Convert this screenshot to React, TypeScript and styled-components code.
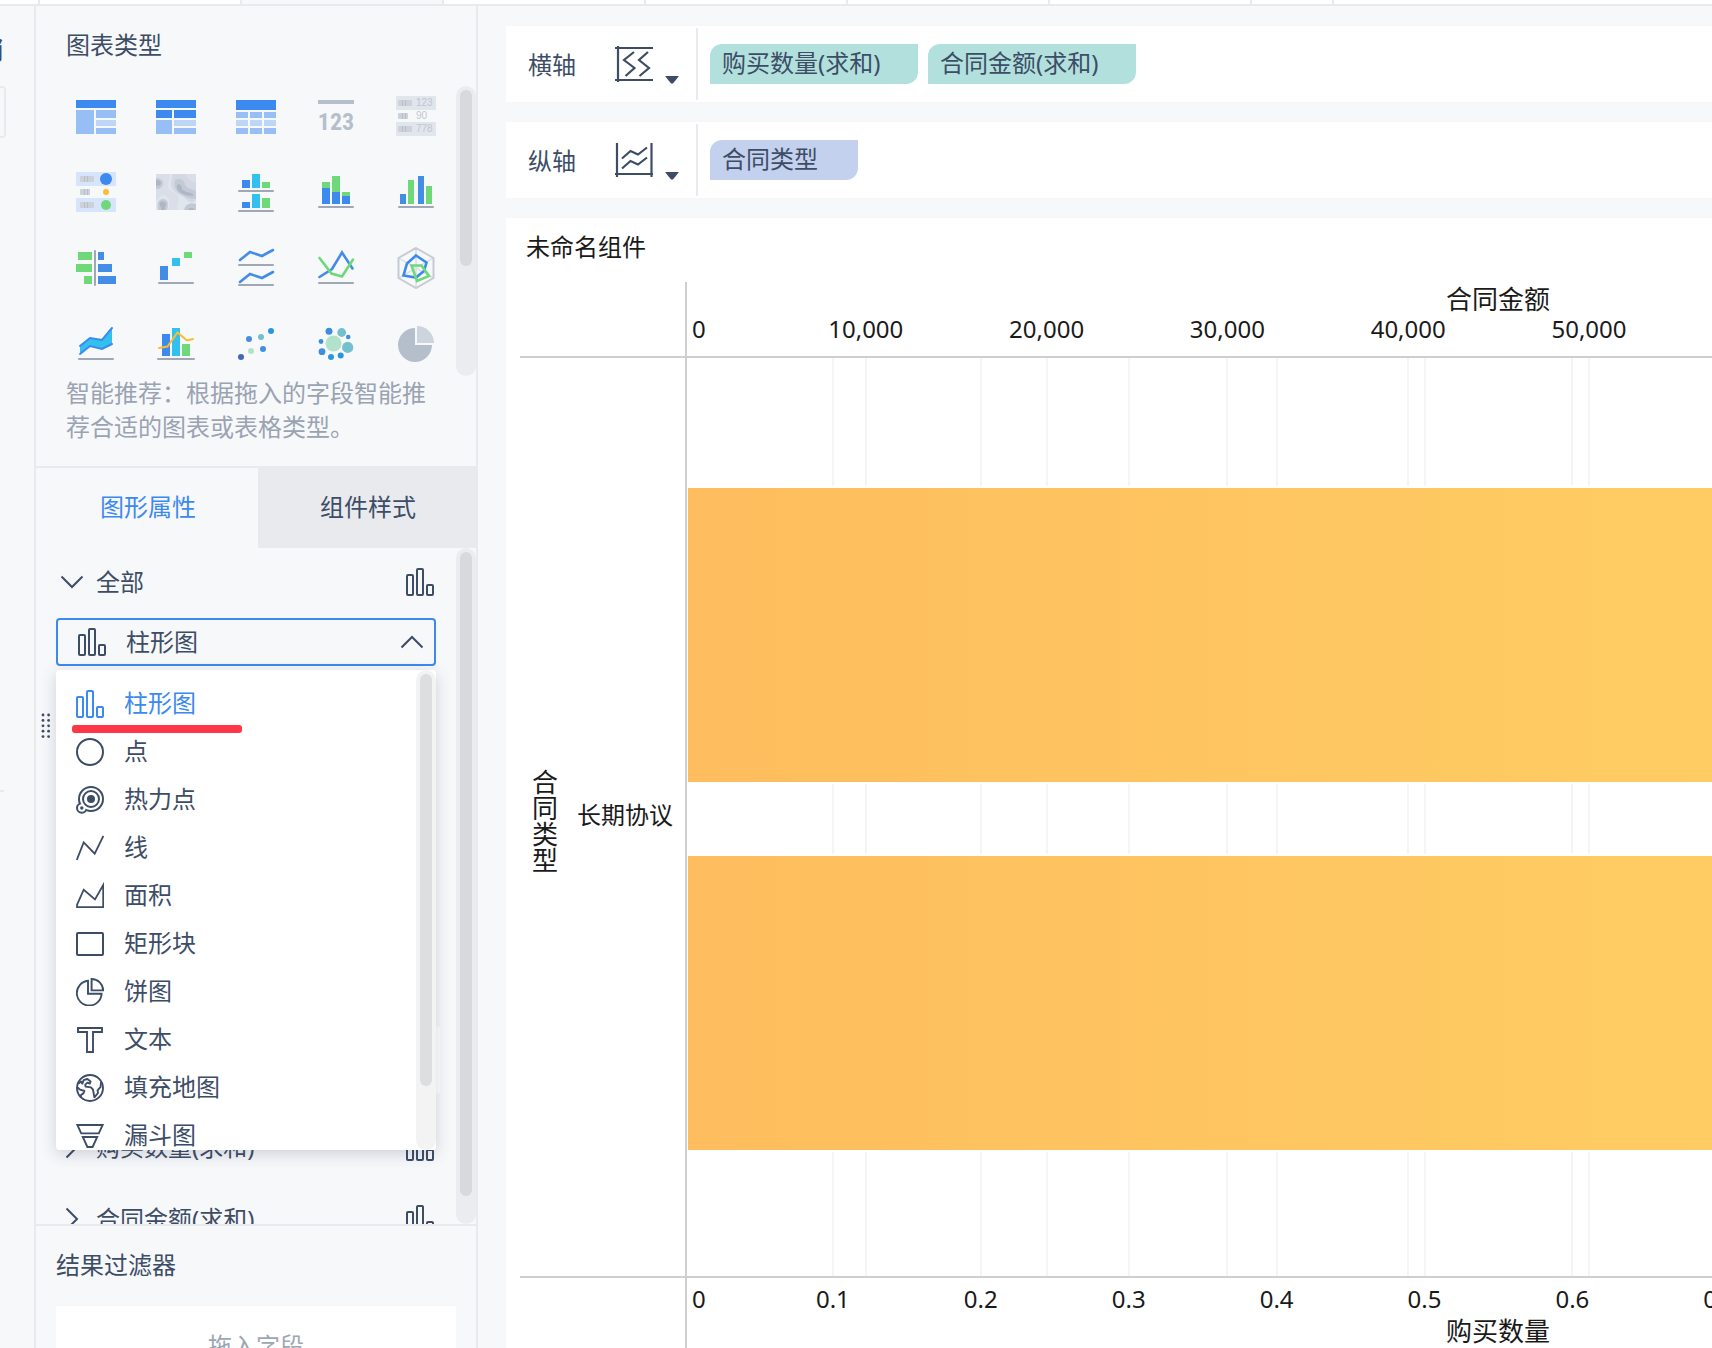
import React from "react";
import styled, { createGlobalStyle, css } from "styled-components";

const INK = "#3d4d66";
const BLUE = "#3c89f0";
const BLUE_SOFT = "#98bff5";
const BLUE_PALE = "#bdd6f8";
const STEEL = "#448de6";
const CYAN = "#32c0ef";
const GREEN = "#6fd97a";
const YELLOW = "#fcbd2e";
const RULE = "#a0a7b6";
const SILVER = "#b5becb";
const PANEL = "#f7f8fa";
const BORDER = "#e8eaed";

const GlobalStyle = createGlobalStyle`
  *, *::before, *::after { box-sizing: border-box; }
  body {
    margin: 0;
    background: ${PANEL};
    color: ${INK};
    font-family: "Noto Sans", "Noto Sans CJK SC", sans-serif;
    font-size: 24px;
    line-height: 34px;
  }
  button, select {
    margin: 0;
    padding: 0;
    border: 0;
    background: none;
    color: inherit;
    font: inherit;
    text-align: left;
    cursor: pointer;
  }
  svg { display: block; flex: none; }
`;

/* ---------- page frame ---------- */

const Page = styled.div`
  display: flex;
  flex-direction: column;
  height: 100vh;
  overflow: hidden;
`;

const TabStrip = styled.div`
  display: flex;
  flex: none;
  height: 6px;
  background: #fff;
  border-bottom: 2px solid ${BORDER};
`;

const StripTab = styled.div<{ $width: number; $active?: boolean }>`
  flex: none;
  width: ${(p) => p.$width}px;
  border-right: 2px solid ${BORDER};
  background: ${(p) => (p.$active ? PANEL : "#fff")};
`;

const Body = styled.div`
  display: flex;
  flex: 1;
  min-height: 0;
`;

/* ---------- data pane (mostly off screen) ---------- */

const DataPane = styled.aside`
  display: flex;
  flex-direction: column;
  flex: none;
  width: 36px;
  padding-right: 28px;
  border-right: 2px solid ${BORDER};
  overflow: hidden;
`;

const DataTitle = styled.h2`
  display: flex;
  justify-content: flex-end;
  flex: none;
  height: 80px;
  margin: 0;
  padding-right: 3px;
  overflow: hidden;
  font-size: 24px;
  font-weight: 700;
  line-height: 88px;
`;

const SearchEdge = styled.div`
  flex: none;
  height: 52px;
  border: 2px solid ${BORDER};
  border-left: 0;
  border-radius: 0 4px 4px 0;
`;

const PaneDivider = styled.div`
  flex: none;
  height: 2px;
  margin: 652px 2px 0 0;
  background: ${BORDER};
`;

/* ---------- settings pane ---------- */

const SettingsPane = styled.aside`
  position: relative;
  display: flex;
  flex-direction: column;
  flex: none;
  width: 442px;
  border-right: 2px solid ${BORDER};
`;

const PaneTitle = styled.h2`
  flex: none;
  height: 80px;
  margin: 0;
  padding-left: 30px;
  font-size: 24px;
  font-weight: 400;
  line-height: 78px;
`;

const TypeArea = styled.div`
  display: flex;
  flex: none;
  height: 290px;
`;

const TypeGrid = styled.div`
  display: grid;
  flex: 1;
  grid-template-columns: repeat(5, 40px);
  grid-auto-rows: 40px;
  gap: 36px 40px;
  padding: 10px 0 0 40px;
`;

const TypeButton = styled.button`
  width: 40px;
  height: 40px;
`;

const Track = styled.div<{ $tone?: "light" }>`
  flex: none;
  width: 20px;
  padding: 4px;
  border-radius: 10px;
  background: ${(p) => (p.$tone === "light" ? "#f3f3f3" : "#ebecf0")};
`;

const Thumb = styled.div<{ $size: number; $tone?: "light" }>`
  height: ${(p) => p.$size}px;
  border-radius: 6px;
  background: ${(p) => (p.$tone === "light" ? "#dddee0" : "#d8d9dd")};
`;

const Hint = styled.p`
  flex: none;
  margin: 0;
  padding: 0 44px 22px 30px;
  color: #9aa3b2;
`;

const Tabs = styled.div`
  display: flex;
  flex: none;
  height: 82px;
  border-top: 2px solid ${BORDER};
`;

const Tab = styled.button<{ $active?: boolean }>`
  flex: ${(p) => (p.$active ? 222 : 218)};
  padding: 0 0 2px 2px;
  text-align: center;
  color: ${(p) => (p.$active ? BLUE : INK)};
  background: ${(p) => (p.$active ? "transparent" : BORDER)};
`;

const AttrArea = styled.div`
  display: flex;
  flex: 1;
  min-height: 0;
  overflow: hidden;
`;

const AttrList = styled.div`
  flex: 1;
  padding: 0 16px 0 20px;
`;

const SectionRow = styled.button<{ $height: number }>`
  display: flex;
  align-items: center;
  gap: 12px;
  width: 100%;
  height: ${(p) => p.$height}px;
  padding: 0 6px 2px 4px;
`;

const SectionName = styled.span`
  flex: 1;
`;

const Field = styled.div`
  position: relative;
  display: flex;
  align-items: center;
  gap: 20px;
  height: 48px;
  margin-right: 4px;
  padding: 0 10px 0 20px;
  border: 2px solid ${BLUE};
  border-radius: 4px;
`;

const FieldSelect = styled.select`
  flex: 1;
  height: 34px;
  appearance: none;
  outline: none;
`;

const Popup = styled.div`
  position: absolute;
  z-index: 2;
  top: 50px;
  left: -2px;
  right: -2px;
  display: flex;
  height: 480px;
  overflow: hidden;
  border-radius: 4px;
  background: #fff;
`;

const PopupShadow = styled(Popup)`
  z-index: 1;
  box-shadow: 0 4px 16px rgba(40, 55, 85, 0.2);
`;

const OptionList = styled.ul`
  flex: 1;
  margin: 0;
  padding: 10px 0 0;
  list-style: none;
`;

const Option = styled.button<{ $active?: boolean }>`
  position: relative;
  display: flex;
  align-items: center;
  gap: 20px;
  width: 100%;
  height: 48px;
  padding-left: 20px;
  color: ${(p) => (p.$active ? BLUE : INK)};
`;

const OptionName = styled.span`
  padding-bottom: 2px;
`;

const Underline = styled.span`
  position: absolute;
  left: 16px;
  bottom: -5px;
  width: 170px;
  height: 8px;
  border-radius: 3px;
  background: #ff3646;
`;

const AttrCard = styled.div`
  height: 68px;
  margin: 360px 0 18px;
  border-radius: 4px;
  background: #fff;
`;

const FilterArea = styled.section`
  display: flex;
  flex-direction: column;
  flex: none;
  height: 124px;
  padding: 0 20px;
  border-top: 2px solid ${BORDER};
  overflow: hidden;
`;

const FilterTitle = styled.h2`
  flex: none;
  height: 80px;
  margin: 0;
  font-size: 24px;
  font-weight: 400;
  line-height: 78px;
`;

const DropZone = styled.div`
  flex: none;
  height: 80px;
  background: #fff;
  color: #9ea6b4;
  text-align: center;
  line-height: 80px;
`;

const Grip = styled.div`
  position: absolute;
  top: 707px;
  left: 5px;
`;

/* ---------- work area ---------- */

const Work = styled.main`
  display: flex;
  flex-direction: column;
  flex: 1;
  gap: 20px;
  min-width: 0;
  padding: 20px 0 0 28px;
`;

const AxisRow = styled.section`
  display: flex;
  flex: none;
  height: 76px;
  padding: 2px 0 2px 22px;
  background: #fff;
`;

const AxisName = styled.h3`
  width: 86px;
  margin: 0;
  font-size: 24px;
  font-weight: 400;
  line-height: 74px;
`;

const AxisButton = styled.button`
  display: flex;
  align-items: flex-end;
  align-self: center;
  gap: 11px;
  width: 82px;
  height: 40px;
`;

const PillList = styled.div`
  display: flex;
  flex: 1;
  align-items: center;
  gap: 10px;
  padding-left: 12px;
  border-left: 2px solid ${BORDER};
`;

const Pill = styled.button<{ $kind: "measure" | "dimension" }>`
  min-width: ${(p) => (p.$kind === "measure" ? 208 : 148)}px;
  height: 40px;
  padding: 0 36px 2px 12px;
  border-radius: 12px 0 12px 0;
  background: ${(p) => (p.$kind === "measure" ? "#b2e1dd" : "#c3d1ee")};
  line-height: 38px;
  white-space: nowrap;
`;

/* ---------- chart ---------- */

const ChartCard = styled.section`
  display: flex;
  flex-direction: column;
  flex: 1;
  min-height: 0;
  padding-left: 14px;
  background: #fff;
  color: #1a1a1a;
`;

const ChartTitle = styled.h2`
  flex: none;
  height: 64px;
  margin: 0;
  padding-left: 6px;
  font-size: 24px;
  font-weight: 400;
  line-height: 58px;
`;

const AXIS_LINE = "2px solid #cfcfcf";

const ChartGrid = styled.div`
  display: grid;
  flex: 1;
  grid-template-columns: 167px 1fr;
  grid-template-rows: 76px 1fr 70px;
  min-height: 0;
  overflow: hidden;
`;

const Corner = styled.div<{ $ruled?: boolean }>`
  border-right: ${AXIS_LINE};
  ${(p) => p.$ruled && css`border-bottom: ${AXIS_LINE};`}
`;

const CategoryCell = styled.div`
  display: flex;
  align-items: center;
  justify-content: space-between;
  padding: 0 12px;
  border-right: ${AXIS_LINE};
  border-bottom: ${AXIS_LINE};
`;

const VerticalTitle = styled.span`
  width: 26px;
  padding-top: 8px;
  font-size: 26px;
  line-height: 26px;
  word-break: break-all;
`;

const CategoryName = styled.span`
  padding-bottom: 4px;
`;

const AxisBand = styled.div<{ $ruled?: boolean }>`
  position: relative;
  width: 1622px;
  ${(p) => p.$ruled && css`border-bottom: ${AXIS_LINE};`}
`;

const BandTitle = styled.div<{ $below?: boolean }>`
  padding-top: ${(p) => (p.$below ? 36 : 0)}px;
  text-align: center;
  font-size: 26px;
  line-height: 34px;
`;

const Tick = styled.span<{ $below?: boolean; $first?: boolean }>`
  position: absolute;
  top: ${(p) => (p.$below ? 4 : 30)}px;
  transform: ${(p) => (p.$first ? "none" : "translateX(-50%)")};
`;

const Plot = styled.div`
  position: relative;
  display: flex;
  flex-direction: column;
  gap: 74px;
  width: 1622px;
  padding: 130px 144px 126px 1px;
  border-bottom: ${AXIS_LINE};
`;

const GridLine = styled.i`
  position: absolute;
  top: 0;
  bottom: 0;
  width: 2px;
  background: #f5f5f5;
`;

const Bar = styled.div`
  position: relative;
  flex: 1;
  background: linear-gradient(90deg, #febd5e, #ffd365);
  box-shadow: 0 0 0 2px #fff;
  clip-path: inset(-2px 0);
`;

/* ---------- chart type icons ---------- */

type R = [number, number, number, number, string];
const Rects = ({ items }: { items: R[] }) => (
  <>
    {items.map(([x, y, w, h, f], i) => (
      <rect key={i} x={x} y={y} width={w} height={h} fill={f} />
    ))}
  </>
);
const Base = ({ y, x = 2, w = 36 }: { y: number; x?: number; w?: number }) => (
  <rect x={x} y={y} width={w} height={2} rx={1} fill={RULE} />
);
const Dash = ({ x, y, w }: { x: number; y: number; w: number }) => (
  <g>
    <rect x={x} y={y} width={w} height={6} rx={1} fill="#ccd1da" />
    <rect x={x + 4} y={y} width={1} height={6} fill="#b9bfca" />
    <rect x={x + 7} y={y} width={1} height={6} fill="#b9bfca" />
  </g>
);
const Trend = ({ d, c, w = 2.6 }: { d: string; c: string; w?: number }) => (
  <polyline points={d} fill="none" stroke={c} strokeWidth={w} strokeLinecap="round" />
);
const numStyle = { fontFamily: '"Liberation Sans", sans-serif', fontSize: 10 };

const chartTypes: { name: string; art: React.ReactNode }[] = [
  {
    name: "分组表",
    art: <Rects items={[[0, 4, 40, 8, BLUE], [0, 14, 18, 24, BLUE_SOFT], [20, 14, 20, 8, BLUE_SOFT], [20, 24, 20, 6, BLUE_PALE], [20, 32, 20, 6, BLUE_SOFT]]} />,
  },
  {
    name: "交叉表",
    art: <Rects items={[[0, 4, 40, 8, BLUE], [0, 14, 16, 8, BLUE], [18, 14, 22, 8, BLUE], [0, 24, 16, 14, BLUE_SOFT], [18, 24, 22, 6, BLUE_PALE], [18, 32, 22, 6, BLUE_SOFT]]} />,
  },
  {
    name: "明细表",
    art: (
      <Rects
        items={[
          [0, 4, 40, 10, BLUE],
          ...[0, 14, 28].flatMap((x): R[] => [[x, 16, 12, 6, BLUE_SOFT], [x, 24, 12, 6, BLUE_PALE], [x, 32, 12, 6, BLUE_SOFT]]),
        ]}
      />
    ),
  },
  {
    name: "KPI指标卡",
    art: (
      <>
        <rect x={2} y={4} width={36} height={4} fill={SILVER} />
        <text x={20} y={34} textAnchor="middle" fill={SILVER} fontWeight={700} fontSize={24} fontFamily='"Liberation Sans Narrow", "Roboto Condensed", Roboto, sans-serif'>123</text>
      </>
    ),
  },
  {
    name: "文本表",
    art: (
      <>
        <Rects items={[[0, 0, 40, 14, "#e1e5ec"], [0, 26, 40, 14, "#e1e5ec"]]} />
        <Dash x={2} y={4} w={14} />
        <Dash x={2} y={17} w={10} />
        <Dash x={2} y={30} w={14} />
        <g fill="#c0c6d2" style={numStyle}>
          <text x={20} y={10}>123</text>
          <text x={20} y={23}>90</text>
          <text x={20} y={36}>778</text>
        </g>
      </>
    ),
  },
  {
    name: "颜色表格",
    art: (
      <>
        <Rects items={[[0, 0, 40, 14, "#d6e4fc"], [0, 26, 40, 14, "#d6e4fc"]]} />
        <Dash x={4} y={4} w={14} />
        <Dash x={4} y={17} w={10} />
        <Dash x={4} y={30} w={14} />
        <circle cx={30} cy={7} r={6} fill={BLUE} />
        <circle cx={30} cy={20} r={3} fill={YELLOW} />
        <circle cx={30} cy={33} r={5} fill={GREEN} />
      </>
    ),
  },
  {
    name: "热力区域图",
    art: (
      <svg x={0} y={2} width={40} height={36} viewBox="0 0 40 36">
        <rect width={40} height={36} fill="#e1e5ed" />
        <path d="M0 0H14C15 5 11 8 12 13C14 18 20 18 22 22C24 28 20 31 22 36H12C15 30 14 22 8 21C4 21 3 25 0 27Z" fill="#d9dee8" />
        <path d="M16 0H40V26C36 30 32 28 29 24C25 21 17 19 15 12C14 7 17 5 16 0Z" fill="#d3d8e2" />
        <path d="M19 6C24 3 29 6 29 11C31 15 36 15 40 17V25C35 25 31 24 27 21C21 19 17 13 19 6Z" fill="#c4cad5" />
        <path d="M21 11C23 9 26 11 26 15C28 18 33 18 37 20V22C32 22 28 21 25 19C22 17 20 14 21 11Z" fill="#afb7c4" />
        <path d="M0 4C4 4 7 6 7 9C7 13 4 15 0 15Z" fill="#c4cad5" />
        <path d="M0 6C3 6 5 7 5 9C5 11 3 12 0 12Z" fill="#afb7c4" />
        <path d="M2 36C1 30 2 25 7 25C12 25 13 30 11 36Z" fill="#c4cad5" />
        <path d="M5 36C6 33 3 32 4 29C5 27 9 27 10 30C10 33 8 33 9 36Z" fill="#afb7c4" />
        <path d="M28 36C29 31 34 28 40 30V36Z" fill="#c4cad5" />
        <path d="M32 36C33 33 37 33 39 36Z" fill="#afb7c4" />
        <path d="M30 0C31 5 35 8 40 9V0Z" fill="#d9dee8" />
      </svg>
    ),
  },
  {
    name: "多系列柱形图",
    art: (
      <>
        <Rects items={[[6, 8, 8, 8, BLUE], [16, 2, 8, 14, CYAN], [26, 10, 8, 6, GREEN], [6, 30, 8, 6, BLUE], [16, 22, 8, 14, CYAN], [26, 26, 8, 10, GREEN]]} />
        <Base y={18} />
        <Base y={38} />
      </>
    ),
  },
  {
    name: "堆积柱形图",
    art: (
      <>
        <Rects items={[[6, 10, 8, 6, GREEN], [6, 16, 8, 16, BLUE], [16, 4, 8, 16, GREEN], [16, 20, 8, 12, BLUE], [26, 20, 8, 4, GREEN], [26, 24, 8, 8, BLUE]]} />
        <Base y={34} />
      </>
    ),
  },
  {
    name: "分组柱形图",
    art: (
      <>
        <Rects items={[[4, 22, 6, 10, STEEL], [12, 8, 6, 24, GREEN], [22, 4, 6, 28, STEEL], [30, 14, 6, 18, GREEN]]} />
        <Base y={34} />
      </>
    ),
  },
  {
    name: "对比柱状图",
    art: (
      <>
        <Rects items={[[2, 4, 14, 8, GREEN], [0, 16, 16, 8, GREEN], [8, 28, 8, 8, GREEN], [22, 4, 6, 8, STEEL], [22, 16, 14, 8, STEEL], [22, 28, 18, 8, STEEL]]} />
        <rect x={18} y={2} width={2} height={36} rx={1} fill={RULE} />
      </>
    ),
  },
  {
    name: "瀑布图",
    art: (
      <>
        <Rects items={[[4, 18, 8, 14, STEEL], [16, 10, 8, 8, CYAN], [28, 4, 8, 6, GREEN]]} />
        <Base y={34} />
      </>
    ),
  },
  {
    name: "多系列折线图",
    art: (
      <>
        <Trend d="4,12 14,4 26,8 37,2" c={STEEL} />
        <Trend d="4,34 14,26 26,30 37,24" c={STEEL} />
        <Base y={16} />
        <Base y={36} />
      </>
    ),
  },
  {
    name: "范围折线图",
    art: (
      <>
        <Trend d="3.5,29 16,21 26,4.5 36.5,20.5" c={STEEL} />
        <Trend d="3.5,10 15.5,25.5 26,28.5 37,11.5" c={GREEN} />
        <Base y={34} />
      </>
    ),
  },
  {
    name: "雷达图",
    art: (
      <g fill="none" strokeWidth={2}>
        <path d="M20 20V0M20 20L37.5 10M20 20L37.5 30M20 20V40M20 20L2.5 30M20 20L2.5 10" stroke="#dfe3e9" />
        <path d="M20 0L37.5 10V30L20 40L2.5 30V10Z" stroke="#c6ccd6" />
        <path d="M20 7.5L30.5 14.5L28 23L20 29.5L7.5 27.5L11 15.5Z" stroke={BLUE} strokeWidth={2.6} />
        <path d="M15.5 17.5H25.5L33 28L21 33Z" stroke={GREEN} strokeWidth={2.6} />
      </g>
    ),
  },
  {
    name: "面积图",
    art: (
      <>
        <path d="M4 22L14 14L26 16L36 4V20L26 25L14 22L4 30Z" fill={CYAN} />
        <Trend d="4,22 14,14 26,16 36,4" c={BLUE} w={2} />
        <Trend d="4,30 14,22 26,25 36,20" c={BLUE} w={2} />
        <Base y={34} />
      </>
    ),
  },
  {
    name: "组合图",
    art: (
      <>
        <Rects items={[[6, 10, 8, 22, BLUE], [16, 4, 8, 28, CYAN], [26, 20, 8, 12, GREEN]]} />
        <Trend d="3,24 11.5,22.5 21.5,8.5 31,16.5 37,15" c={YELLOW} w={2} />
        <Base y={34} x={1} w={38} />
      </>
    ),
  },
  {
    name: "散点图",
    art: (
      <>
        <circle cx={5} cy={33} r={3} fill="#4267b8" />
        <circle cx={13} cy={15} r={3} fill={STEEL} />
        <circle cx={15} cy={27} r={3} fill="#b2e2cc" />
        <circle cx={25} cy={13} r={3} fill="#73c0ce" />
        <circle cx={27} cy={25} r={3} fill={STEEL} />
        <circle cx={35} cy={7} r={3} fill="#2897de" />
      </>
    ),
  },
  {
    name: "聚合气泡图",
    art: (
      <>
        <circle cx={17.5} cy={19.5} r={8} fill="#b2e2cc" />
        <circle cx={13} cy={7.3} r={3.5} fill="#3f8edd" />
        <circle cx={25.7} cy={8.5} r={4.4} fill="#73c0ce" />
        <circle cx={32.2} cy={13} r={2.3} fill="#3f8edd" />
        <circle cx={31.7} cy={23.4} r={5.6} fill="#73c0ce" />
        <circle cx={5} cy={17.5} r={2.4} fill="#3f8edd" />
        <circle cx={6} cy={27.7} r={3.4} fill="#3f8edd" />
        <circle cx={15} cy={33} r={3} fill="#2897de" />
        <circle cx={24.7} cy={31.4} r={3} fill="#2897de" />
      </>
    ),
  },
  {
    name: "饼图",
    art: (
      <>
        <path d="M19 21V4A17 17 0 1 0 36 21Z" fill={SILVER} />
        <path d="M21 19V2A17 17 0 0 1 38 19Z" fill="#cdd4de" />
      </>
    ),
  },
];

/* ---------- mark icons ---------- */

const Mark = ({ children, width = 2 }: { children: React.ReactNode; width?: number }) => (
  <svg width={28} height={28} viewBox="0 0 28 28" fill="none" stroke="currentColor" strokeWidth={width} aria-hidden="true">
    {children}
  </svg>
);

const BarsIcon = () => (
  <Mark>
    <rect x={1} y={7} width={6} height={20} rx={1} />
    <rect x={11} y={1} width={6} height={26} rx={1} />
    <rect x={21} y={17} width={6} height={10} rx={1} />
  </Mark>
);

const marks: { name: string; icon: React.ReactNode }[] = [
  { name: "柱形图", icon: <BarsIcon /> },
  { name: "点", icon: <Mark><circle cx={14} cy={14} r={13} /></Mark> },
  {
    name: "热力点",
    icon: (
      <Mark>
        <g stroke="none">
          <circle cx={15} cy={13} r={13} fill="currentColor" />
          <circle cx={5.8} cy={22} r={5.8} fill="currentColor" />
          <circle cx={15} cy={13} r={11} fill="#fff" />
          <circle cx={5.8} cy={22} r={3.8} fill="#fff" />
          <circle cx={15} cy={13} r={4} fill="currentColor" />
          <circle cx={5.8} cy={22} r={1.7} fill="currentColor" />
        </g>
        <circle cx={15} cy={13} r={8} />
      </Mark>
    ),
  },
  { name: "线", icon: <Mark width={1.8}><path d="M.8 26L7.7 8.3L18.7 19.7L27.4 2" /></Mark> },
  { name: "面积", icon: <Mark width={1.8}><path d="M1 25.2V23L7.7 7.7L19 17.4L27.2 3V25.2Z" /></Mark> },
  { name: "矩形块", icon: <Mark><rect x={1} y={3} width={26} height={22} rx={1} /></Mark> },
  {
    name: "饼图",
    icon: (
      <Mark width={1.9}>
        <path d="M12 2.8V15.7H25.6A12.4 12.4 0 1 1 12 2.8Z" />
        <path d="M15.6 1V12.4H27.2A11.6 11.6 0 0 0 15.6 1Z" />
      </Mark>
    ),
  },
  { name: "文本", icon: <Mark width={1.9}><path d="M2 2H26V6H17V26H11V6H2Z" /></Mark> },
  {
    name: "填充地图",
    icon: (
      <Mark width={1.9}>
        <circle cx={14} cy={14} r={13} />
        <path d="M2.2 9.8L5 7.6L6.4 9.6L7.6 6.2L11.4 5L14.6 7.4L13.8 9.6L11.4 8.6L9.2 10.6L9.6 12.6L15 13.4L17 15.6L18.4 23.4L22 19L21.6 16.4L24.6 12.8L25 8" strokeLinejoin="round" />
        <path d="M1.4 13.2L3.6 15.4L8.4 17L7.4 19.4L5 21L4.8 24" strokeLinejoin="round" />
      </Mark>
    ),
  },
  {
    name: "漏斗图",
    icon: (
      <Mark width={1.9}>
        <path d="M1.4 3H26.6L22.8 11.4H5.2Z" />
        <path d="M6.8 15H21.2L16.6 25H11.4Z" />
      </Mark>
    ),
  },
];

const Chevron = ({ to }: { to: "down" | "up" | "right" }) => {
  const d = { down: "M1.5 6.5L12 17L22.5 6.5", up: "M1.5 17.5L12 7L22.5 17.5", right: "M6.5 1.5L17 12L6.5 22.5" }[to];
  return (
    <svg width={24} height={24} viewBox="0 0 24 24" fill="none" stroke="currentColor" strokeWidth={2} aria-hidden="true">
      <path d={d} />
    </svg>
  );
};

const Caret = () => (
  <svg width={14} height={8} viewBox="0 0 14 8" aria-hidden="true">
    <path d="M0 0H14L8 7.5H6Z" fill={INK} />
  </svg>
);

const axisArt = {
  x: (
    <svg width={40} height={40} viewBox="0 0 40 40" fill="none" stroke={INK} strokeWidth={2.2} aria-hidden="true">
      <path d="M4 2V38M1 4H39M1 36H39M20 8L10 16L20.5 24L11.5 32M34 8L25 16L35 24L25.5 32" />
    </svg>
  ),
  y: (
    <svg width={40} height={40} viewBox="0 0 40 40" fill="none" stroke={INK} strokeWidth={2.2} aria-hidden="true">
      <path d="M3 3V37M37.5 3V37M1 34H39M8 18.5L16.5 11L24 14.5L33 7.5M8 28.5L16.5 21L24 24.5L33 17.5" />
    </svg>
  ),
};

/* ---------- data ---------- */

const stripTabs = [40, 202, 202, 202, 202, 202, 202, 82];
const AMOUNT_STEP = 180.8;
const COUNT_STEP = 147.9;
const amounts = Array.from({ length: 8 }, (_, i) => ({ label: (i * 10000).toLocaleString("en-US"), at: i * AMOUNT_STEP - 2 }));
const counts = Array.from({ length: 11 }, (_, i) => ({ label: String(i / 10), at: i * COUNT_STEP - 2 }));

type TickData = { label: string; at: number };
const Ticks = ({ items, below }: { items: TickData[]; below?: boolean }) => (
  <>
    {items.map((t, i) => (
      <Tick key={t.label} $below={below} $first={i === 0} style={{ left: i === 0 ? 5 : t.at }}>
        {t.label}
      </Tick>
    ))}
  </>
);

export default function App() {
  return (
    <Page>
      <GlobalStyle />
      <TabStrip>
        {stripTabs.map((w, i) => (
          <StripTab key={i} $width={w} $active={i === 2} />
        ))}
      </TabStrip>
      <Body>
        <DataPane>
          <DataTitle>销</DataTitle>
          <SearchEdge />
          <PaneDivider />
        </DataPane>

        <SettingsPane>
          <PaneTitle>图表类型</PaneTitle>
          <TypeArea>
            <TypeGrid>
              {chartTypes.map((t) => (
                <TypeButton key={t.name} type="button" aria-label={t.name}>
                  <svg width={40} height={40} viewBox="0 0 40 40" aria-hidden="true" overflow="visible">
                    {t.art}
                  </svg>
                </TypeButton>
              ))}
            </TypeGrid>
            <Track>
              <Thumb $size={176} />
            </Track>
          </TypeArea>
          <Hint>智能推荐：根据拖入的字段智能推荐合适的图表或表格类型。</Hint>

          <Tabs role="tablist">
            <Tab type="button" role="tab" aria-selected="true" $active>图形属性</Tab>
            <Tab type="button" role="tab" aria-selected="false">组件样式</Tab>
          </Tabs>

          <AttrArea>
            <AttrList>
              <SectionRow type="button" aria-expanded="true" $height={70}>
                <Chevron to="down" />
                <SectionName>全部</SectionName>
                <BarsIcon />
              </SectionRow>
              <Field>
                <BarsIcon />
                <FieldSelect aria-label="图形" defaultValue="柱形图">
                  {marks.map((m) => (
                    <option key={m.name}>{m.name}</option>
                  ))}
                </FieldSelect>
                <Chevron to="up" />
                <PopupShadow aria-hidden="true" />
                <Popup>
                  <OptionList>
                    {marks.map((m, i) => (
                      <li key={m.name}>
                        <Option type="button" $active={i === 0}>
                          {m.icon}
                          <OptionName>{m.name}</OptionName>
                          {i === 0 && <Underline />}
                        </Option>
                      </li>
                    ))}
                  </OptionList>
                  <Track $tone="light">
                    <Thumb $size={412} $tone="light" />
                  </Track>
                </Popup>
              </Field>
              <AttrCard />
              <SectionRow type="button" aria-expanded="false" $height={72}>
                <Chevron to="right" />
                <SectionName>购买数量(求和)</SectionName>
                <BarsIcon />
              </SectionRow>
              <SectionRow type="button" aria-expanded="false" $height={72}>
                <Chevron to="right" />
                <SectionName>合同金额(求和)</SectionName>
                <BarsIcon />
              </SectionRow>
            </AttrList>
            <Track>
              <Thumb $size={644} />
            </Track>
          </AttrArea>

          <FilterArea>
            <FilterTitle>结果过滤器</FilterTitle>
            <DropZone>拖入字段</DropZone>
          </FilterArea>

          <Grip aria-hidden="true">
            <svg width={10} height={26} viewBox="0 0 10 26" fill={INK}>
              {[0, 1, 2, 3, 4].map((r) => (
                <g key={r}>
                  <circle cx={2} cy={2 + r * 5.4} r={1.4} />
                  <circle cx={7.6} cy={2 + r * 5.4} r={1.4} />
                </g>
              ))}
            </svg>
          </Grip>
        </SettingsPane>

        <Work>
          <AxisRow>
            <AxisName>横轴</AxisName>
            <AxisButton type="button" aria-label="横轴设置">
              {axisArt.x}
              <Caret />
            </AxisButton>
            <PillList>
              <Pill type="button" $kind="measure">购买数量(求和)</Pill>
              <Pill type="button" $kind="measure">合同金额(求和)</Pill>
            </PillList>
          </AxisRow>
          <AxisRow>
            <AxisName>纵轴</AxisName>
            <AxisButton type="button" aria-label="纵轴设置">
              {axisArt.y}
              <Caret />
            </AxisButton>
            <PillList>
              <Pill type="button" $kind="dimension">合同类型</Pill>
            </PillList>
          </AxisRow>

          <ChartCard>
            <ChartTitle>未命名组件</ChartTitle>
            <ChartGrid>
              <Corner $ruled />
              <AxisBand $ruled>
                <BandTitle>合同金额</BandTitle>
                <Ticks items={amounts} />
              </AxisBand>
              <CategoryCell>
                <VerticalTitle>合同类型</VerticalTitle>
                <CategoryName>长期协议</CategoryName>
              </CategoryCell>
              <Plot>
                {[...amounts, ...counts].filter((t) => t.at > 0).map((t) => (
                  <GridLine key={t.label} style={{ left: Math.round(t.at - 1) }} />
                ))}
                <Bar />
                <Bar />
              </Plot>
              <Corner />
              <AxisBand>
                <Ticks items={counts} below />
                <BandTitle $below>购买数量</BandTitle>
              </AxisBand>
            </ChartGrid>
          </ChartCard>
        </Work>
      </Body>
    </Page>
  );
}
